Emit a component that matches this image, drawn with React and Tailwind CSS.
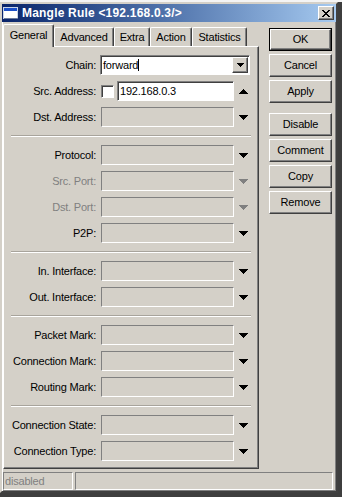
import React from 'react'

const raised =
  'border border-t-white border-l-white border-b-[#404040] border-r-[#404040] shadow-[inset_-1px_-1px_0_#808080]'
const sunken = 'border border-t-[#808080] border-l-[#808080] border-b-white border-r-white'
const sunkenWhite =
  'bg-white border border-t-[#808080] border-l-[#808080] border-b-white border-r-white shadow-[inset_1px_1px_0_#404040]'

const TABS = [
  { label: 'General', w: 'w-[51px]', active: true },
  { label: 'Advanced', w: 'w-[60px]' },
  { label: 'Extra', w: 'w-[36px]' },
  { label: 'Action', w: 'w-[42px]' },
  { label: 'Statistics', w: 'w-[55px]' },
]

const GROUPS = [
  ['Protocol', 'Src. Port', 'Dst. Port', 'P2P'],
  ['In. Interface', 'Out. Interface'],
  ['Packet Mark', 'Connection Mark', 'Routing Mark'],
  ['Connection State', 'Connection Type'],
]

const DISABLED = ['Src. Port', 'Dst. Port']

function Arrow({ up, gray, small }) {
  const w = small ? 7 : 9
  const h = small ? 4 : 5
  const pts = up ? `0,${h} ${w},${h} ${w / 2},0` : `0,0 ${w},0 ${w / 2},${h}`
  return (
    <svg width={w} height={h} viewBox={`0 0 ${w} ${h}`} shapeRendering="crispEdges">
      <polygon points={pts} fill={gray ? '#808080' : '#000'} />
    </svg>
  )
}

function Label({ children, disabled }) {
  return (
    <div
      className={`w-[92px] shrink-0 text-right whitespace-nowrap ${
        disabled ? 'text-[#808080]' : 'text-black'
      }`}
    >
      {children}:
    </div>
  )
}

function Row({ label }) {
  const disabled = DISABLED.includes(label)
  return (
    <div className="flex items-center h-[20px]">
      <Label disabled={disabled}>{label}</Label>
      <div className={`ml-[5px] w-[133px] h-[20px] ${sunken}`} />
      <div className="ml-[5px] flex items-center">
        <Arrow gray={disabled} />
      </div>
    </div>
  )
}

function Separator() {
  return <div className="ml-[7px] w-[240px] my-[8px] h-[2px] border-t border-t-[#a8a49c] border-b border-b-white" />
}

function Button({ children, primary, className = '' }) {
  return (
    <div className={`${primary ? 'border border-black' : ''} ${className}`}>
      <div
        className={`${raised} flex items-center justify-center text-black ${
          primary ? 'h-[21px]' : 'h-[23px]'
        }`}
      >
        {children}
      </div>
    </div>
  )
}

export default function App() {
  return (
    <div className="w-[342px] h-[497px] bg-[#3e3e3e] overflow-hidden font-['Liberation_Sans',Arial,sans-serif] text-[11px] tracking-[-0.2px] leading-none">
      {/* ── strip of whatever sits behind ─────────── */}
      <div className="h-[2px] bg-[#f4f4f4]" />

      {/* ── Window ────────────────────────────────── */}
      <div className="w-[338px] bg-[#d4d0c8] border-2 border-t-[#d4d0c8] border-l-[#d4d0c8] border-r-[#404040] border-b-[#404040] shadow-[inset_1px_1px_0_white,inset_-1px_-1px_0_#808080]">
        {/* title bar */}
        <div className="h-[18px] flex items-center bg-gradient-to-r from-[#0a246a] to-[#a6caf0]">
          <svg width="15" height="12" viewBox="0 0 15 12" className="ml-[1px]" shapeRendering="crispEdges">
            <rect x="0.5" y="0.5" width="14" height="11" fill="#fff" stroke="#c8d4e8" />
            <rect x="1" y="1" width="13" height="3" fill="#1c50c8" />
            <rect x="1" y="11" width="14" height="1" fill="#6a7a9a" />
          </svg>
          <span className="ml-[4px] text-white font-bold text-[12px] tracking-[0.2px]">
            Mangle Rule &lt;192.168.0.3/&gt;
          </span>
          <div className={`ml-auto mr-[2px] w-[16px] h-[14px] bg-[#d4d0c8] flex items-center justify-center ${raised}`}>
            <svg width="8" height="7" viewBox="0 0 8 7" shapeRendering="crispEdges">
              <path d="M0 0h2v1h1v1h2V1h1V0h2v1H7v1H6v1H5v1h1v1h1v1h1v1H6V6H5V5H3v1H2v1H0V6h1V5h1V4h1V3H2V2H1V1H0z" fill="#000" />
            </svg>
          </div>
        </div>

        {/* body */}
        <div className="pl-[1px] pr-[3px]">
          <div className="flex">
            {/* tabs + panel */}
            <div className="w-[256px]">
              <div className="h-[24px] flex items-end">
                {TABS.map(({ label, w, active }) => (
                  <div
                    key={label}
                    className={`${w} shrink-0 flex items-center justify-center text-black rounded-t-[2px] border-t border-l border-r border-t-white border-l-white border-r-[#404040] shadow-[inset_-1px_0_0_#808080] bg-[#d4d0c8] ${
                      active ? 'h-[23px] -mb-px relative z-10 pb-[2px]' : 'h-[19px]'
                    }`}
                  >
                    {label}
                  </div>
                ))}
              </div>
              <div className="border border-t-white border-l-white border-r-[#404040] border-b-[#404040] shadow-[inset_-1px_-1px_0_#808080] pt-[8px] pb-[7px]">
                <div className="flex flex-col gap-[6px]">
                  <div className="flex items-center h-[20px]">
                    <Label>Chain</Label>
                    <div className={`ml-[4px] w-[150px] h-[20px] flex items-center ${sunkenWhite}`}>
                      <span className="pl-[2px] text-black">forward</span>
                      <span className="w-px h-[12px] bg-black" />
                      <div className={`ml-auto mr-px w-[16px] h-[16px] bg-[#d4d0c8] flex items-center justify-center ${raised}`}>
                        <Arrow small />
                      </div>
                    </div>
                  </div>
                  <div className="flex items-center h-[20px]">
                    <Label>Src. Address</Label>
                    <div className={`ml-[5px] w-[13px] h-[13px] ${sunkenWhite}`} />
                    <div className={`ml-[3px] w-[117px] h-[20px] flex items-center ${sunkenWhite}`}>
                      <span className="pl-[2px] text-black">192.168.0.3</span>
                    </div>
                    <div className="ml-[5px] flex items-center">
                      <Arrow up />
                    </div>
                  </div>
                  <Row label="Dst. Address" />
                </div>
                {GROUPS.map((g) => (
                  <React.Fragment key={g[0]}>
                    <Separator />
                    <div className="flex flex-col gap-[6px]">
                      {g.map((l) => (
                        <Row key={l} label={l} />
                      ))}
                    </div>
                  </React.Fragment>
                ))}
              </div>
            </div>

            {/* buttons */}
            <div className="ml-[10px] w-[63px] pt-[6px] flex flex-col">
              <Button primary>OK</Button>
              <Button className="mt-[3px]">Cancel</Button>
              <Button className="mt-[3px]">Apply</Button>
              <Button className="mt-[10px]">Disable</Button>
              <Button className="mt-[3px]">Comment</Button>
              <Button className="mt-[3px]">Copy</Button>
              <Button className="mt-[3px]">Remove</Button>
            </div>
          </div>

          {/* status bar */}
          <div className="mt-[3px] mb-[1px] flex h-[18px]">
            <div className={`w-[70px] flex items-center pl-[1px] text-[#808080] ${sunken}`}>disabled</div>
            <div className={`ml-[2px] w-[260px] ${sunken}`} />
          </div>
        </div>
      </div>
    </div>
  )
}
